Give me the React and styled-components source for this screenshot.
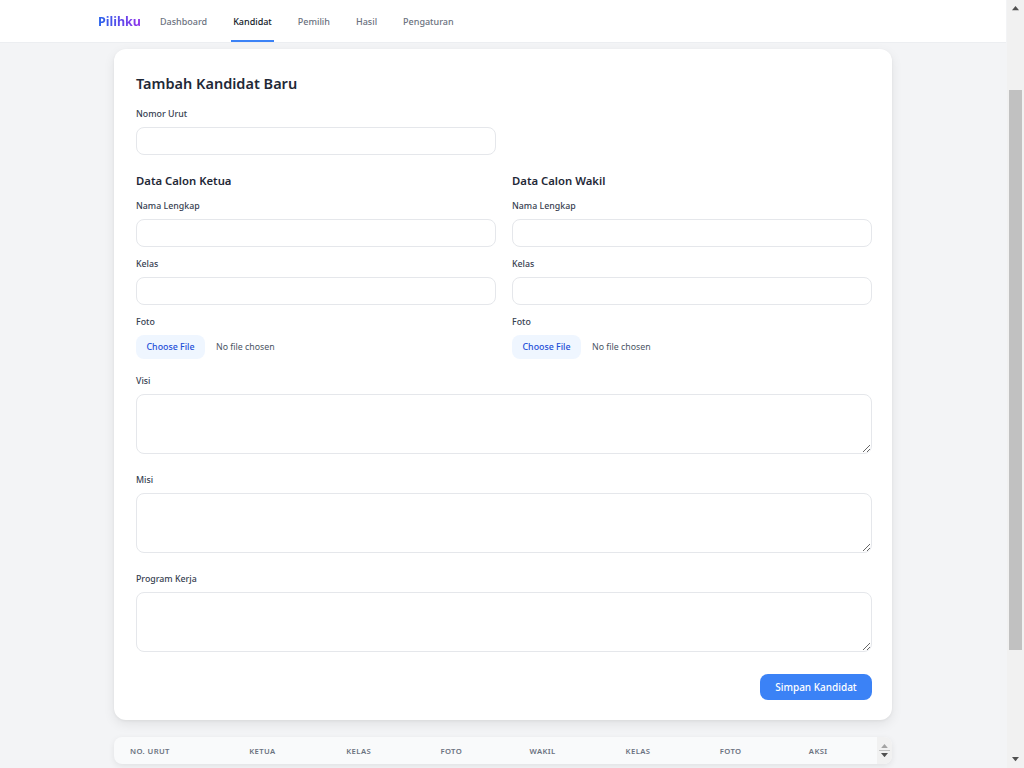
import React from "react";
import styled, { createGlobalStyle } from "styled-components";

const GlobalStyle = createGlobalStyle`
  html, body {
    margin: 0;
    padding: 0;
    background: #f3f4f6;
    font-family: "Noto Sans", "Open Sans", sans-serif;
    color: #1f2937;
    overflow: hidden;
  }
  * { box-sizing: border-box; }
`;

const Viewport = styled.div`
  display: flex;
  height: 100vh;
  overflow: hidden;
`;

const Page = styled.div`
  flex: 1;
  display: flex;
  flex-direction: column;
  min-width: 0;
  padding-right: 1px;
`;

/* page scrollbar, drawn since the page is shown scrolled */
const ScrollTrack = styled.div`
  width: 17px;
  flex: none;
  display: flex;
  flex-direction: column;
  align-items: center;
  background: #f1f1f1;
`;

const ArrowBox = styled.div`
  height: 17px;
  width: 17px;
  display: flex;
  align-items: center;
  justify-content: center;
  flex: none;
`;

const ThumbArea = styled.div`
  flex: 1;
  width: 100%;
  padding: 73px 2px 101px;
  display: flex;
`;

const Thumb = styled.div`
  flex: 1;
  background: #c1c1c1;
`;

const NavBar = styled.nav`
  height: 43px;
  flex: none;
  background: #ffffff;
  border-bottom: 1px solid #eceef1;
`;

const NavInner = styled.div`
  max-width: 810px;
  height: 100%;
  margin: 0 auto;
  display: flex;
  align-items: stretch;
`;

const Logo = styled.div`
  display: flex;
  align-items: center;
  font-size: 12.5px;
  font-weight: 700;
  margin-right: 17px;
  background: linear-gradient(90deg, #2563eb, #9333ea);
  -webkit-background-clip: text;
  background-clip: text;
  color: transparent;
`;

const NavLinks = styled.div`
  display: flex;
  gap: 22px;
`;

const NavLink = styled.a`
  display: flex;
  align-items: center;
  padding: 0 2px;
  font-size: 9px;
  font-weight: 500;
  text-decoration: none;
  cursor: pointer;
  color: ${(p) => (p.$active ? "#111827" : "#6b7280")};
  border-bottom: 2px solid ${(p) => (p.$active ? "#3b82f6" : "transparent")};
  border-top: 2px solid transparent;
`;

const Main = styled.main`
  width: 778px;
  margin: 0 auto;
  padding-top: 6px;
`;

const Card = styled.section`
  background: #ffffff;
  border-radius: 12px;
  box-shadow: 0 4px 12px rgba(0, 0, 0, 0.08), 0 1px 3px rgba(0, 0, 0, 0.05);
  padding: 22px 20px 20px 22px;
`;

const Title = styled.h2`
  margin: 0 0 12px;
  font-size: 14.5px;
  line-height: 24px;
  font-weight: 600;
  color: #1f2937;
`;

const Field = styled.div`
  display: flex;
  flex-direction: column;
  width: ${(p) => (p.$half ? "calc((100% - 16px) / 2)" : "100%")};
  margin-bottom: ${(p) => p.$mb || 0}px;
`;

const Label = styled.label`
  display: block;
  font-size: 8.8px;
  line-height: 14px;
  font-weight: 500;
  color: #374151;
  margin-bottom: 6px;
`;

const Input = styled.input`
  display: block;
  width: 100%;
  height: 28px;
  border: 1px solid #e5e7eb;
  border-radius: 8px;
  padding: 0 10px;
  font: inherit;
  font-size: 10px;
  outline: none;
`;

const FileRow = styled.div`
  display: flex;
  align-items: center;
  gap: 11px;
  height: 24px;
`;

const FileButton = styled.label`
  display: flex;
  align-items: center;
  justify-content: center;
  height: 24px;
  width: 69px;
  border-radius: 8px;
  background: #eff6ff;
  color: #1d4ed8;
  font-size: 8.8px;
  font-weight: 500;
  cursor: pointer;
`;

const FileName = styled.span`
  font-size: 8.8px;
  color: #4b5563;
`;

const HiddenFile = styled.input`
  display: none;
`;

const TextArea = styled.textarea`
  display: block;
  width: 100%;
  height: 60px;
  border: 1px solid #e5e7eb;
  border-radius: 8px;
  padding: 6px 10px;
  font: inherit;
  font-size: 10px;
  outline: none;
`;

const Columns = styled.div`
  display: grid;
  grid-template-columns: 1fr 1fr;
  gap: 16px;
  margin-top: 17px;
  margin-bottom: 15px;
`;

const Column = styled.div`
  display: flex;
  flex-direction: column;
  gap: 10px;
`;

const SectionTitle = styled.h3`
  margin: 0 0 -1px;
  font-size: 11.3px;
  line-height: 18px;
  font-weight: 600;
  color: #1f2937;
`;

const Actions = styled.div`
  display: flex;
  justify-content: flex-end;
  margin-top: 22px;
`;

const SaveButton = styled.button`
  height: 26px;
  width: 112px;
  border: none;
  border-radius: 8px;
  background: #3b82f6;
  color: #ffffff;
  font-family: "Noto Sans", sans-serif;
  font-size: 10px;
  font-weight: 500;
  cursor: pointer;

  &:hover {
    background: #2563eb;
  }
`;

const TableCard = styled.div`
  margin-top: 17px;
  height: 27px;
  display: flex;
  overflow: hidden;
  background: #f9fafb;
  border-radius: 8px;
  box-shadow: 0 2px 6px rgba(0, 0, 0, 0.08);
`;

const TableScroll = styled.div`
  flex: 1;
  overflow: hidden;
`;

const MiniScroll = styled.div`
  width: 15px;
  flex: none;
  display: flex;
  flex-direction: column;
  align-items: center;
  justify-content: center;
  gap: 2px;
  background: #f1f1f1;
`;

const MiniThumb = styled.div`
  width: 11px;
  height: 1px;
  background: #c1c1c1;
`;

const Table = styled.table`
  width: 100%;
  border-collapse: collapse;
  table-layout: fixed;
`;

const Th = styled.th`
  width: ${(p) => p.$w}px;
  height: 27px;
  padding: 0 0 0 16px;
  text-align: left;
  font-size: 7.7px;
  font-weight: 600;
  letter-spacing: 0.05em;
  text-transform: uppercase;
  color: #6b7280;
  white-space: nowrap;
`;

const navItems = ["Dashboard", "Kandidat", "Pemilih", "Hasil", "Pengaturan"];
const columns = [
  ["No. Urut", 119],
  ["Ketua", 97],
  ["Kelas", 94],
  ["Foto", 89],
  ["Wakil", 96],
  ["Kelas", 94],
  ["Foto", 89],
  ["Aksi", 84],
];

function Arrow({ up, color = "#505050", size = 7 }) {
  return (
    <svg width={size} height={size * 0.6} viewBox="0 0 10 6">
      <polygon points={up ? "0,6 10,6 5,0" : "0,0 10,0 5,6"} fill={color} />
    </svg>
  );
}

function PersonFields({ title, prefix }) {
  return (
    <Column>
      <SectionTitle>{title}</SectionTitle>
      <Field>
        <Label htmlFor={`${prefix}-nama`}>Nama Lengkap</Label>
        <Input id={`${prefix}-nama`} type="text" />
      </Field>
      <Field>
        <Label htmlFor={`${prefix}-kelas`}>Kelas</Label>
        <Input id={`${prefix}-kelas`} type="text" />
      </Field>
      <Field>
        <Label>Foto</Label>
        <FileRow>
          <FileButton htmlFor={`${prefix}-foto`}>Choose File</FileButton>
          <FileName>No file chosen</FileName>
          <HiddenFile id={`${prefix}-foto`} type="file" accept="image/*" />
        </FileRow>
      </Field>
    </Column>
  );
}

export default function App() {
  return (
    <>
      <GlobalStyle />
      <Viewport>
        <Page>
          <NavBar>
            <NavInner>
              <Logo>Pilihku</Logo>
              <NavLinks>
                {navItems.map((item) => (
                  <NavLink key={item} $active={item === "Kandidat"}>
                    {item}
                  </NavLink>
                ))}
              </NavLinks>
            </NavInner>
          </NavBar>

          <Main>
            <Card>
              <Title>Tambah Kandidat Baru</Title>
              <Field $half>
                <Label htmlFor="nomor">Nomor Urut</Label>
                <Input id="nomor" type="number" />
              </Field>

              <Columns>
                <PersonFields title="Data Calon Ketua" prefix="ketua" />
                <PersonFields title="Data Calon Wakil" prefix="wakil" />
              </Columns>

              <Field $mb={19}>
                <Label htmlFor="visi">Visi</Label>
                <TextArea id="visi" />
              </Field>
              <Field $mb={19}>
                <Label htmlFor="misi">Misi</Label>
                <TextArea id="misi" />
              </Field>
              <Field>
                <Label htmlFor="program">Program Kerja</Label>
                <TextArea id="program" />
              </Field>

              <Actions>
                <SaveButton type="button">Simpan Kandidat</SaveButton>
              </Actions>
            </Card>

            <TableCard>
              <TableScroll>
                <Table>
                  <thead>
                    <tr>
                      {columns.map(([name, w], i) => (
                        <Th key={i} $w={w}>
                          {name}
                        </Th>
                      ))}
                    </tr>
                  </thead>
                </Table>
              </TableScroll>
              <MiniScroll>
                <Arrow up color="#a3a3a3" size={7} />
                <MiniThumb />
                <Arrow color="#505050" size={7} />
              </MiniScroll>
            </TableCard>
          </Main>
        </Page>

        <ScrollTrack>
          <ArrowBox>
            <Arrow up />
          </ArrowBox>
          <ThumbArea>
            <Thumb />
          </ThumbArea>
          <ArrowBox>
            <Arrow />
          </ArrowBox>
        </ScrollTrack>
      </Viewport>
    </>
  );
}
